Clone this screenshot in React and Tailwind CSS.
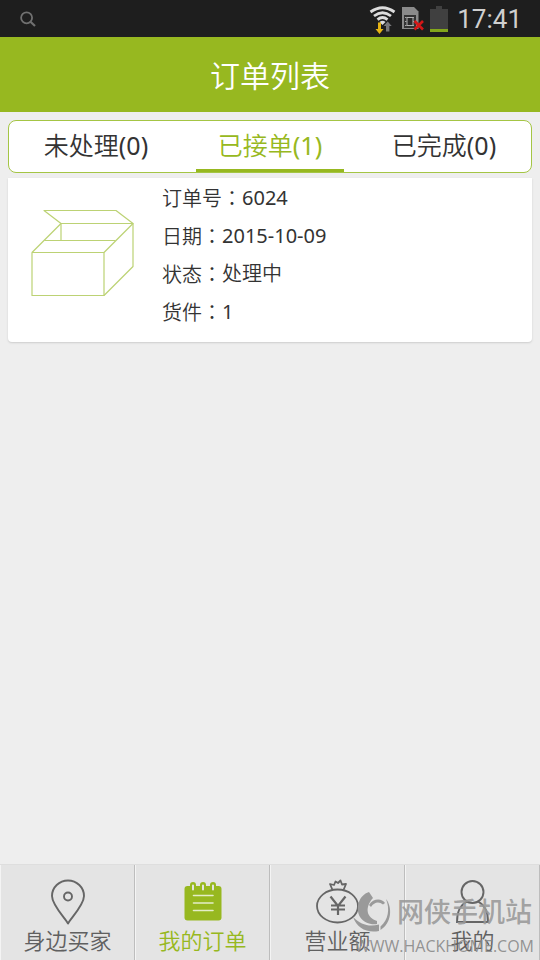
import { useState } from 'react'

const tabs = [
    { id: 'pending', label: '未处理', count: 0 },
    { id: 'accepted', label: '已接单', count: 1 },
    { id: 'done', label: '已完成', count: 0 },
]

const orderFields = [
    { label: '订单号', value: '6024', numeric: true },
    { label: '日期', value: '2015-10-09', numeric: true },
    { label: '状态', value: '处理中' },
    { label: '货件', value: '1', numeric: true },
]

function StatusBar() {
    return (
        <div className="bg-[#1e1e1e] h-[37px] shrink-0 flex items-center justify-between pl-5 pr-[18px]">
            <svg width="16" height="16" viewBox="0 0 16 16" fill="none" stroke="#707070" strokeWidth="1.8">
                <circle cx="6.6" cy="6.8" r="5.5" />
                <path d="M10.5 10.8 L15 15" strokeWidth="2.2" />
            </svg>
            <div className="flex items-center gap-[6px]">
                <svg width="28" height="30" viewBox="0 0 28 30" fill="none">
                    <g stroke="#dcdcdc" strokeWidth="2.8">
                        <path d="M2.5 8 Q14.5 -0.5 26.5 8" />
                        <path d="M6 12 Q14.500 5.5 23 12" />
                        <path d="M9.5 15.6 Q14.500 11.500 19.500 15.600" />
                    </g>
                    <path d="M11.500 18 Q14.500 15.500 17.500 18 L14.500 21 Z" fill="#dcdcdc" />
                    <path d="M10 18.500 H13 V25 H15.500 L11.500 30 L7.500 25 H10 Z" fill="#e5b414" />
                    <path d="M18 27.500 V22 H15.700 L19.700 17.500 L23.700 22 H21.400 V27.500 Z" fill="#77777a" />
                </svg>
                <svg width="22" height="24" viewBox="0 0 22 24" fill="none">
                    <path d="M0 0 H12 L16.500 4.500 V22 H0 Z" fill="#8a8a8a" />
                    <rect x="2" y="8" width="12" height="13" fill="#333" />
                    <path d="M3 10.500 H13 M3 14.500 H13 M3 18.500 H13" stroke="#a5a5a5" strokeDasharray="1.5 1" />
                    <rect x="5" y="10.500" width="6" height="8" fill="#2a2a2a" stroke="#b0b0b0" />
                    <path d="M12.500 14 L21 22.500 M21 14 L12.500 22.500" stroke="#d41717" strokeWidth="2.6" />
                </svg>
                <svg width="18" height="28" viewBox="0 0 18 28">
                    <path d="M6 1 H12 V4 H18 V24 H0 V4 H6 Z" fill="#404040" />
                    <rect y="24" width="18" height="3" fill="#83a61b" />
                </svg>
                <span className="font-[Roboto] text-[26px] leading-8 text-[#cfcfcf] pl-[3px]">17:41</span>
            </div>
        </div>
    )
}

function OrderTabs({ active, onChange }) {
    return (
        <div className="bg-white border border-[#a4c544] rounded-[8px] h-[53px] grid grid-cols-3">
            {tabs.map((tab) => (
                <button
                    key={tab.id}
                    type="button"
                    onClick={() => onChange(tab.id)}
                    className={
                        tab.id === active
                            ? 'mx-[13px] pt-[2px] text-[25px] font-[350] text-[#97b820] border-b-3 border-[#97b820]'
                            : 'mx-[13px] pt-[2px] text-[25px] font-[350] text-[#333] border-b-3 border-transparent'
                    }
                >
                    {tab.label}<span className="font-normal">({tab.count})</span>
                </button>
            ))}
        </div>
    )
}

function BoxIcon() {
    return (
        <svg width="104" height="88" viewBox="0 0 104 88" fill="none" stroke="#bcd274" strokeWidth="1.2" strokeLinejoin="round">
            <path d="M1 43.500 H73 V86.500 H1 Z" />
            <path d="M1 43.500 L30 14.500 H102 L73 43.500" />
            <path d="M30 14.500 L13 1.500 H85 L102 14.500 V57.500 L73 86.500" />
            <path d="M30 14.500 V31.500 M13.500 31.500 H84.500" />
        </svg>
    )
}

function OrderCard() {
    return (
        <article className="bg-white rounded-b-[4px] shadow-[0_1px_2px_#cccccc] flex h-[164px]">
            <div className="w-[154px] pl-[23px] pt-[31px]">
                <BoxIcon />
            </div>
            <dl className="pt-[1px]">
                {orderFields.map((field) => (
                    <div key={field.label} className="flex h-[38px] items-center text-xl text-[#333]">
                        <dt className="font-[350]">{field.label}<span className="font-['Noto_Sans_CJK_TC']">：</span></dt>
                        <dd className={field.numeric ? 'font-normal' : 'font-[350]'}>{field.value}</dd>
                    </div>
                ))}
            </dl>
        </article>
    )
}

function PinIcon() {
    return (
        <svg width="46" height="46" viewBox="0 0 46 46" fill="none" stroke="#666" strokeWidth="1.9">
            <path d="M23 44.500 C20 39 7 26 7 17 A16 15.500 0 0 1 39 17 C39 26 26 39 23 44.500 Z" strokeLinejoin="round" />
            <circle cx="23" cy="17.500" r="4" />
        </svg>
    )
}

function NoteIcon() {
    return (
        <svg width="46" height="46" viewBox="0 0 46 46" fill="none">
            <rect x="4.500" y="7" width="37" height="34.500" rx="3" fill="#97b820" />
            <g strokeLinecap="round">
                <path d="M13 6 V10 M23 6 V10 M33 6 V10" stroke="#97b820" strokeWidth="6" />
                <path d="M13 6.500 V10.500 M23 6.500 V10.500 M33 6.500 V10.500" stroke="#e4e4e4" strokeWidth="2" />
                <path d="M13.500 16.500 H33 M13.500 24 H33 M13.500 31.500 H33" stroke="#e4edc8" strokeWidth="1.6" />
            </g>
        </svg>
    )
}

function MoneyIcon() {
    return (
        <svg width="46" height="46" viewBox="0 0 46 46" fill="none" stroke="#666" strokeWidth="1.8">
            <ellipse cx="22.500" cy="27" rx="20.500" ry="16.500" />
            <path d="M17.500 11 L15 5 L19 6 L20.500 2.500 L23 4 L25.500 1.500 L27 5.500 L31 5 L28.500 11" strokeLinejoin="round" />
            <path d="M15.500 17.500 L23 27 L30.500 17.500 M23 27 V36 M16 26.500 H30 M16 30.500 H30" strokeWidth="2.2" />
        </svg>
    )
}

function PersonIcon() {
    return (
        <svg width="46" height="46" viewBox="0 0 46 46" fill="none" stroke="#666" strokeWidth="1.9">
            <circle cx="22.500" cy="13" r="11" />
            <path d="M17 22.500 C10 26 7 32 7 43 H38 C38 32 35 26 28 22.500" />
        </svg>
    )
}

const navItems = [
    { label: '身边买家', Icon: PinIcon },
    { label: '我的订单', Icon: NoteIcon, active: true },
    { label: '营业额', Icon: MoneyIcon },
    { label: '我的', Icon: PersonIcon },
]

function BottomNav() {
    return (
        <nav className="grid grid-cols-4 bg-[#e4e4e4] border-t border-[#dedede] h-[96px] shrink-0">
            {navItems.map(({ label, Icon, active }) => (
                <a
                    key={label}
                    href="#"
                    className={
                        active
                            ? 'flex flex-col items-center pt-[14px] border-l border-l-white/60 border-r border-r-[#bdbdbd] text-[#97b820]'
                            : 'flex flex-col items-center pt-[14px] border-l border-l-white/60 border-r border-r-[#bdbdbd] text-[#606060]'
                    }
                >
                    <Icon />
                    <span className="text-[22px] leading-[30px] font-[350]">{label}</span>
                </a>
            ))}
        </nav>
    )
}

function SiteMark() {
    return (
        <div className="absolute right-[6px] bottom-[2px] pointer-events-none text-[#999]/90">
            <div className="flex items-center justify-end gap-[4px] pr-[2px]">
                <svg width="44" height="44" viewBox="0 0 44 44" fill="#9a9a9a">
                    <path d="M20 2 C10 5 6 18 11 27 C15 33 22 35 28 34 L28 31 C18 28 15 18 24 8 Z" />
                    <path d="M4 27 C12 35 20 37 30 34.500 L30 41 C18 43.500 8 38 4 27 Z" />
                    <path d="M20 15 C24 8 33 8 36 13 L34 14.500 C30 11 25 12 22 17 Z" />
                    <path d="M37 9 C43.500 17 43 33 31.500 40 L31.500 36.500 C39.500 30 41 19 37 9 Z" />
                </svg>
                <span className="text-[27px] leading-[44px] font-medium">网侠手机站</span>
            </div>
            <div className="font-['Open_Sans'] text-base leading-6 text-right text-[#888]/90">WWW.HACKHOME.COM</div>
        </div>
    )
}

function App() {
    const [activeTab, setActiveTab] = useState('accepted')

    return (
        <div className="relative min-h-screen flex flex-col bg-[#eee] font-['Noto_Sans','Noto_Sans_CJK_SC',sans-serif]">
            <StatusBar />
            <header className="bg-[#97b820] h-[75px] shrink-0 flex items-center justify-center pt-[2px]">
                <h1 className="text-[30px] font-[350] text-white">订单列表</h1>
            </header>
            <main className="flex-1 px-2 pt-2 flex flex-col gap-[5px]">
                <OrderTabs active={activeTab} onChange={setActiveTab} />
                <OrderCard />
            </main>
            <BottomNav />
            <SiteMark />
        </div>
    )
}

export default App
